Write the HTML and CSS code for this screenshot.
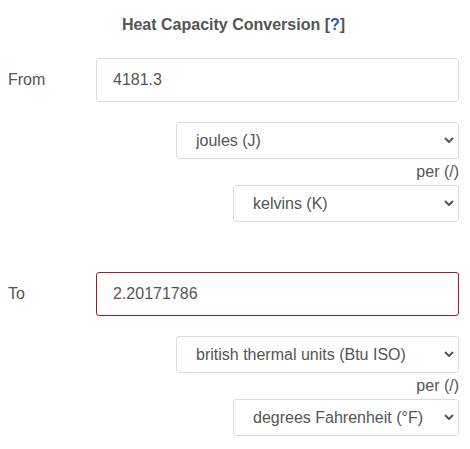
FILE: index.html
```html
<!DOCTYPE html>
<html>
<head>
<meta charset="utf-8">
<link rel="stylesheet" href="styles.css">
</head>
<body>
<div class="converter">
  <h1 class="title">Heat Capacity Conversion <span class="help">[<a href="#">?</a>]</span></h1>

  <div class="row">
    <label class="label">From</label>
    <input class="field" type="text" value="4181.3">
  </div>
  <div class="units">
    <div class="sel-wrap wide">
      <select class="sel"><option>joules (J)</option></select>
      <svg class="chev" viewBox="0 0 10 6" width="10" height="6"><path d="M1 1 L5 5 L9 1" fill="none" stroke="#555" stroke-width="2"/></svg>
    </div>
    <div class="per">per (/)</div>
    <div class="sel-wrap narrow">
      <select class="sel"><option>kelvins (K)</option></select>
      <svg class="chev" viewBox="0 0 10 6" width="10" height="6"><path d="M1 1 L5 5 L9 1" fill="none" stroke="#555" stroke-width="2"/></svg>
    </div>
  </div>

  <div class="row to-row">
    <label class="label">To</label>
    <input class="field result" type="text" value="2.20171786">
  </div>
  <div class="units">
    <div class="sel-wrap wide">
      <select class="sel"><option>british thermal units (Btu ISO)</option></select>
      <svg class="chev" viewBox="0 0 10 6" width="10" height="6"><path d="M1 1 L5 5 L9 1" fill="none" stroke="#555" stroke-width="2"/></svg>
    </div>
    <div class="per">per (/)</div>
    <div class="sel-wrap narrow">
      <select class="sel"><option>degrees Fahrenheit (°F)</option></select>
      <svg class="chev" viewBox="0 0 10 6" width="10" height="6"><path d="M1 1 L5 5 L9 1" fill="none" stroke="#555" stroke-width="2"/></svg>
    </div>
  </div>
</div>
</body>
</html>
```
FILE: styles.css
```css
html, body {
  margin: 0;
  padding: 0;
  background: #fff;
}
body {
  padding: 0 11px 0 8px;
  font-family: "Liberation Sans", Arial, sans-serif;
  color: #555;
  font-size: 16px;
}
.converter {
  width: 451px;
}
.title {
  margin: 0;
  padding-top: 16px;
  height: 58px;
  box-sizing: border-box;
  text-align: center;
  font-size: 16px;
  font-weight: bold;
  color: #555;
  line-height: 18px;
}
.help a {
  color: #1a5fb4;
  text-decoration: none;
}
.row {
  display: flex;
  align-items: center;
  height: 44px;
}
.to-row {
  margin-top: 50px;
}
.label {
  width: 88px;
  flex: none;
  font-size: 16px;
  color: #555;
}
.field {
  flex: none;
  width: 363px;
  height: 44px;
  box-sizing: border-box;
  border: 1px solid #ddd;
  border-radius: 3px;
  padding: 0 16px;
  font-family: "Liberation Sans", Arial, sans-serif;
  font-size: 16px;
  color: #555;
  outline: none;
}
.field.result {
  border-color: #a31c22;
}
.units {
  display: flex;
  flex-direction: column;
  align-items: flex-end;
  padding-top: 20px;
}
.sel-wrap {
  position: relative;
  height: 37px;
}
.sel-wrap.wide { width: 283px; }
.sel-wrap.narrow { width: 226px; }
.sel {
  -webkit-appearance: none;
  appearance: none;
  width: 100%;
  height: 37px;
  box-sizing: border-box;
  border: 1px solid #ddd;
  border-radius: 3px;
  background: #fff;
  padding: 0 30px 0 19px;
  font-family: "Liberation Sans", Arial, sans-serif;
  font-size: 16px;
  color: #555;
}
.chev {
  position: absolute;
  right: 5px;
  top: 15px;
  pointer-events: none;
}
.per {
  height: 26px;
  line-height: 26px;
  font-size: 16px;
  color: #555;
  text-align: right;
}
```
